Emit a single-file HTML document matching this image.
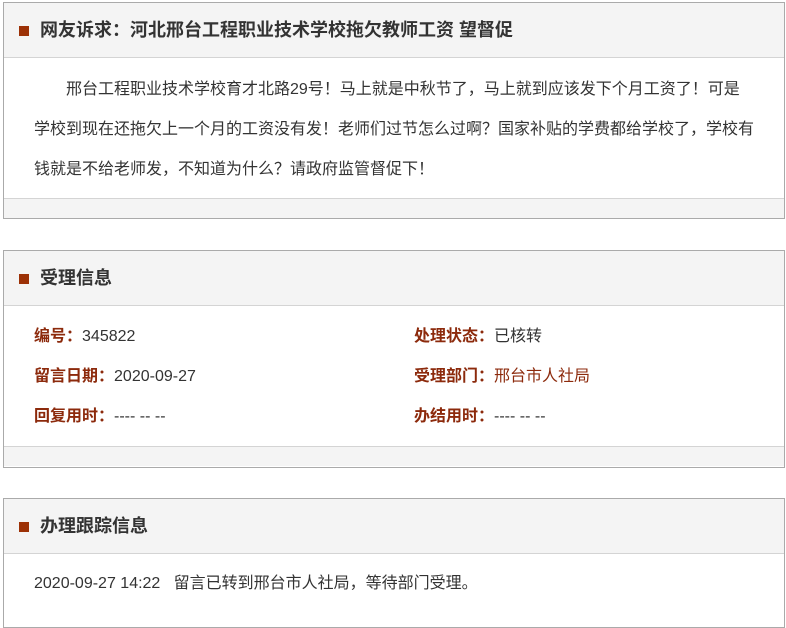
<!DOCTYPE html>
<html><head><meta charset="utf-8"><style>
*{margin:0;padding:0;box-sizing:border-box}
body{width:786px;height:616px;overflow:hidden;background:#fff;font-family:"Liberation Sans","Noto Sans CJK SC",sans-serif;color:#333;font-size:16px}
.box{position:absolute;left:3px;width:782px;border:1px solid #aaa;overflow:hidden}
.hd{height:55px;background:#f4f4f4;border-bottom:1px solid #d4d4d4;position:relative}
.hd i{position:absolute;left:15px;top:23px;width:10px;height:10px;background:#9c3106}
.hd b{position:absolute;left:36px;top:15px;font-size:18px;line-height:24px;color:#333;white-space:nowrap}
.ft{height:20px;background:#f4f4f4;border-top:1px solid #d4d4d4}
.lb{color:#8c2a0c;font-weight:bold}
.row{position:absolute;font-size:16px;line-height:20px;white-space:nowrap}
</style></head><body>
<div class="box" style="top:2px;height:217px">
<div class="hd"><i></i><b>网友诉求：河北邢台工程职业技术学校拖欠教师工资 望督促</b></div>
<div style="height:140px;padding:12px 0 0 30px;line-height:40px;white-space:nowrap"><span style="padding-left:32px"></span>邢台工程职业技术学校育才北路29号！马上就是中秋节了，马上就到应该发下个月工资了！可是<br>学校到现在还拖欠上一个月的工资没有发！老师们过节怎么过啊？国家补贴的学费都给学校了，学校有<br>钱就是不给老师发，不知道为什么？请政府监管督促下！</div>
<div class="ft"></div>
</div>
<div class="box" style="top:250px;height:218px">
<div class="hd"><i></i><b>受理信息</b></div>
<div style="height:140px;position:relative">
<div class="row" style="left:30px;top:21px"><span class="lb">编号：</span>345822</div>
<div class="row" style="left:410px;top:21px"><span class="lb">处理状态：</span>已核转</div>
<div class="row" style="left:30px;top:61px"><span class="lb">留言日期：</span>2020-09-27</div>
<div class="row" style="left:410px;top:61px"><span class="lb">受理部门：</span><span style="color:#8c2a0c">邢台市人社局</span></div>
<div class="row" style="left:30px;top:101px"><span class="lb">回复用时：</span>---- -- --</div>
<div class="row" style="left:410px;top:101px"><span class="lb">办结用时：</span>---- -- --</div>
</div>
<div class="ft"></div>
</div>
<div class="box" style="top:498px;height:130px">
<div class="hd"><i></i><b>办理跟踪信息</b></div>
<div class="row" style="left:30px;top:75px">2020-09-27 14:22&nbsp;&nbsp;&nbsp;留言已转到邢台市人社局，等待部门受理。</div>
</div>
</body></html>
